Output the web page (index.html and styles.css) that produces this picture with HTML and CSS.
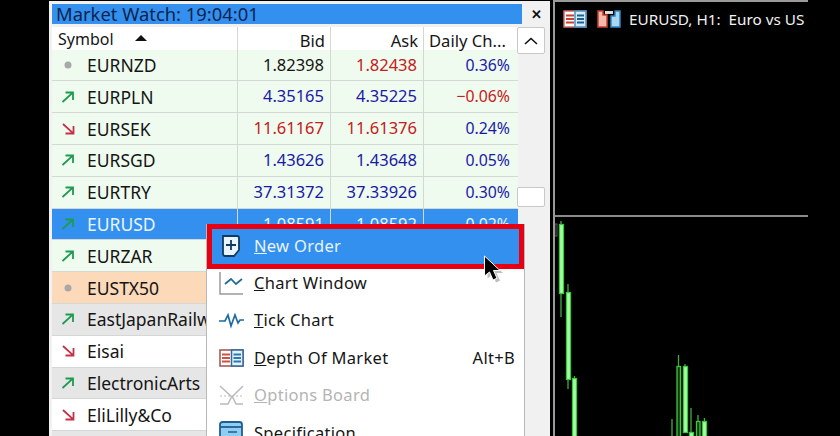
FILE: index.html
```html
<!DOCTYPE html>
<html lang="en">
<head>
<meta charset="utf-8">
<title>Market Watch</title>
<link rel="stylesheet" href="styles.css">
</head>
<body>
<svg class="defs" width="0" height="0">
  <defs>
    <symbol id="up" viewBox="0 0 14 12"><path d="M1.5 11 11.5 1.8M4.5 1.5h7.5v7.5" fill="none" stroke="#1c9c50" stroke-width="1.8"/></symbol>
    <symbol id="down" viewBox="0 0 14 12"><path d="M2 1 12 10.2M12.500 3v7.500H4.500" fill="none" stroke="#c43048" stroke-width="1.800"/></symbol>
    <symbol id="flat" viewBox="0 0 14 12"><circle cx="7" cy="6" r="3.500" fill="#a8a8a8"/></symbol>
  </defs>
</svg>
<div class="app">
  <div class="gutter"></div>
  <section class="panel">
    <div class="titlebar">
      <div class="title">Market Watch: 19:04:01</div>
      <div class="close">✕</div>
    </div>
    <div class="panel-body">
      <div class="table">
        <div class="row head">
          <div class="c sym">Symbol<span class="sort"></span></div>
          <div class="c">Bid</div>
          <div class="c ask">Ask</div>
          <div class="c daily">Daily Ch...</div>
        </div>
        <div class="row green"><div class="c sym"><svg class="ic"><use href="#flat"/></svg>EURNZD</div><div class="c">1.82398</div><div class="c ask neg">1.82438</div><div class="c daily pos">0.36%</div></div>
        <div class="row green"><div class="c sym"><svg class="ic"><use href="#up"/></svg>EURPLN</div><div class="c pos">4.35165</div><div class="c ask pos">4.35225</div><div class="c daily neg">−0.06%</div></div>
        <div class="row green"><div class="c sym"><svg class="ic"><use href="#down"/></svg>EURSEK</div><div class="c neg">11.61167</div><div class="c ask neg">11.61376</div><div class="c daily pos">0.24%</div></div>
        <div class="row green"><div class="c sym"><svg class="ic"><use href="#up"/></svg>EURSGD</div><div class="c pos">1.43626</div><div class="c ask pos">1.43648</div><div class="c daily pos">0.05%</div></div>
        <div class="row green"><div class="c sym"><svg class="ic"><use href="#up"/></svg>EURTRY</div><div class="c pos">37.31372</div><div class="c ask pos">37.33926</div><div class="c daily pos">0.30%</div></div>
        <div class="row sel"><div class="c sym"><svg class="ic"><use href="#up"/></svg>EURUSD</div><div class="c">1.08591</div><div class="c ask">1.08592</div><div class="c daily">0.02%</div></div>
        <div class="row green"><div class="c sym"><svg class="ic"><use href="#up"/></svg>EURZAR</div><div class="c"></div><div class="c ask"></div><div class="c daily"></div></div>
        <div class="row orange"><div class="c sym"><svg class="ic"><use href="#flat"/></svg>EUSTX50</div><div class="c"></div><div class="c ask"></div><div class="c daily"></div></div>
        <div class="row gray"><div class="c sym"><svg class="ic"><use href="#up"/></svg>EastJapanRailway</div><div class="c"></div><div class="c ask"></div><div class="c daily"></div></div>
        <div class="row white"><div class="c sym"><svg class="ic"><use href="#down"/></svg>Eisai</div><div class="c"></div><div class="c ask"></div><div class="c daily"></div></div>
        <div class="row gray"><div class="c sym"><svg class="ic"><use href="#up"/></svg>ElectronicArts</div><div class="c"></div><div class="c ask"></div><div class="c daily"></div></div>
        <div class="row white"><div class="c sym"><svg class="ic"><use href="#down"/></svg>EliLilly&amp;Co</div><div class="c"></div><div class="c ask"></div><div class="c daily"></div></div>
        <div class="row gray"><div class="c sym"></div><div class="c"></div><div class="c ask"></div><div class="c daily"></div></div>
      </div>
      <div class="scroll">
        <div class="scroll-btn">
          <svg width="14" height="8" viewBox="0 0 14 8"><path d="M1 7 7 1.500 13 7" fill="none" stroke="#111" stroke-width="1.600"/></svg>
        </div>
        <div class="scroll-thumb"></div>
      </div>
    </div>
  </section>
  <section class="chart">
    <div class="chart-head">
      <svg class="tool" width="24" height="18" viewBox="0 0 24 18">
        <rect x="1" y="1" width="22" height="16" fill="#fff" stroke="#d06a6a" stroke-width="1.500"/>
        <path d="M12 1h11v16H12z" fill="#d7ecfa" stroke="#4a90c0" stroke-width="1.500"/>
        <path d="M3 5.500h8M3 9h8M3 12.500h8" stroke="#c8402f" stroke-width="2"/>
        <path d="M14 5.500h7M14 9h7M14 12.500h7" stroke="#1f5f90" stroke-width="2"/>
      </svg>
      <svg class="tool" width="24" height="18" viewBox="0 0 24 18">
        <path d="M1 1h5v4h4v12H1z" fill="#f4b9ab" stroke="#c8402f" stroke-width="1.500"/>
        <path d="M18 1h5v16h-9V6h4z" fill="#a9d6f2" stroke="#2c86c4" stroke-width="1.500"/>
        <rect x="8" y="1" width="8" height="3" fill="#ddd"/>
      </svg>
      <span class="chart-title">EURUSD, H1:&nbsp; Euro vs US</span>
    </div>
    <div class="chart-sep"></div>
    <svg class="candles" width="285" height="220" viewBox="555 216 285 220">
      <g class="wick">
        <path d="M561 220V316M568 283V388M574.500 375V436M672 418V436M678.500 354V436M685 363V431M691 407V436M698 414V436M704.500 417V436"/>
      </g>
      <rect class="ghost" x="555" y="223" width="2" height="12"/>
      <g class="body">
        <rect x="559.500" y="223.500" width="4" height="69"/>
        <rect x="566.500" y="291.500" width="4" height="87"/>
        <rect x="572.500" y="377.500" width="4" height="60"/>
        <rect x="683.500" y="365.500" width="4" height="66"/>
        <rect x="689.500" y="431.500" width="4" height="6"/>
        <rect x="702.500" y="420.500" width="4" height="17"/>
      </g>
      <g class="hollow">
        <rect x="677" y="365.500" width="3.500" height="72"/>
        <rect x="696.500" y="420.500" width="3.500" height="17"/>
      </g>
    </svg>
  </section>
  <nav class="menu">
    <div class="item active">
      <svg class="mi" width="24" height="24" viewBox="0 0 24 24">
        <path d="M4 2h14a2 2 0 0 1 2 2v12l-5 6H6a2 2 0 0 1-2-2z" fill="#eaf4ff" stroke="#123a5e" stroke-width="1.800"/>
        <path d="M12 6v10M7 11h10" stroke="#123a5e" stroke-width="1.800"/>
      </svg>
      <span class="label"><u>N</u>ew Order</span>
    </div>
    <div class="item">
      <svg class="mi" width="24" height="24" viewBox="0 0 24 24">
        <path d="M1 1v22h24" fill="none" stroke="#9a9a9a" stroke-width="1.500"/>
        <path d="M6 13 12 8l5 5 6-5" fill="none" stroke="#1d6a9c" stroke-width="1.700"/>
      </svg>
      <span class="label"><u>C</u>hart Window</span>
    </div>
    <div class="item">
      <svg class="mi" width="26" height="24" viewBox="0 0 26 24">
        <path d="M0 12h6l3-6 3 11 4-11 3 8 2-3h4" fill="none" stroke="#1d6a9c" stroke-width="1.700"/>
      </svg>
      <span class="label"><u>T</u>ick Chart</span>
    </div>
    <div class="item">
      <svg class="mi" width="25" height="18" viewBox="0 0 25 18">
        <rect x="1" y="1" width="23" height="16" fill="#fff" stroke="#a05050" stroke-width="1.500"/>
        <path d="M12.500 1H24v16H12.500z" fill="#e4f1fa" stroke="#2c6c9c" stroke-width="1.500"/>
        <path d="M3 5.500h8M3 9h8M3 12.500h8" stroke="#d0503f" stroke-width="2"/>
        <path d="M14.500 5.500h7.500M14.500 9h7.500M14.500 12.500h7.500" stroke="#2c78b0" stroke-width="2"/>
      </svg>
      <span class="label"><u>D</u>epth Of Market</span>
      <span class="keys">Alt+B</span>
    </div>
    <div class="item off">
      <svg class="mi" width="25" height="22" viewBox="0 0 25 22">
        <path d="M1 1 14 13l3 6h7M24 1 12 13l-3 6H1" fill="none" stroke="#bbb" stroke-width="1.500"/>
        <path d="M1 11h23" stroke="#bbb" stroke-dasharray="2 2"/>
      </svg>
      <span class="label"><u>O</u>ptions Board</span>
    </div>
    <div class="item">
      <svg class="mi" width="24" height="24" viewBox="0 0 24 24">
        <rect x="1" y="1" width="22" height="22" rx="2.500" fill="#8fcdf3" stroke="#1f5f90" stroke-width="1.800"/>
        <path d="M1 6h22" stroke="#1f5f90" stroke-width="1.800"/>
        <path d="M9 11h9M9 16h9" stroke="#1f5f90" stroke-width="1.500"/>
      </svg>
      <span class="label">Specification</span>
    </div>
  </nav>
  <svg class="cursor" width="22" height="30" viewBox="0 0 22 30">
    <path d="M4 2v20l5-4 3.500 8 4-1.800-3.500-7.700h6.500z" fill="#000" opacity=".25" transform="translate(1.500 1.500)"/>
    <path d="M2.500 1v20l5-4 3.500 8 4-1.800-3.500-7.700H18z" fill="#000" stroke="#fff" stroke-width="1"/>
  </svg>
</div>
</body>
</html>
```

FILE: styles.css
```css
* { box-sizing: border-box; }
html, body { margin: 0; padding: 0; background: #000; }
body {
  width: 840px;
  height: 436px;
  overflow: hidden;
  font-family: "Noto Sans", "Noto Sans CJK JP", sans-serif;
  font-size: 16.5px;
  color: #151515;
}
.defs { position: absolute; }
.app { position: relative; display: flex; width: 840px; height: 436px; overflow: hidden; background: #000; }
.gutter { width: 49px; flex: none; }

.panel {
  width: 501px;
  height: 436px;
  flex: none;
  margin-top: 1px;
  padding: 3px 0 0 3px;
  background: #f1f1f1;
  overflow: hidden;
}
.titlebar { display: flex; height: 20px; margin-bottom: 3px; }
.title {
  width: 470px;
  height: 20px;
  padding-left: 4px;
  background: #3390ee;
  color: #0b2450;
  font-size: 18.4px;
  line-height: 20px;
  white-space: nowrap;
}
.close { flex: 1; text-align: center; font-size: 13px; font-weight: 700; line-height: 20px; color: #111; }

.panel-body { display: flex; }
.table { width: 466px; flex: none; }
.row {
  display: grid;
  grid-template-columns: 186px 93px 93px 94px;
  height: 31.8px;
  border-bottom: 1.5px solid #d4d8d4;
}
.row.head { height: 22.6px; background: #fff; border-bottom: 0; }
.c {
  padding: 1px 6px 0 0;
  line-height: 28px;
  text-align: right;
  white-space: nowrap;
  overflow: hidden;
  border-right: 1.5px solid #d4d8d4;
}
.c.daily { border-right: 0; padding-right: 8px; font-size: 15.8px; }
.head .c { padding-top: 3.5px; line-height: 19px; padding-right: 5px; overflow: visible; }
.head .c.daily { text-align: left; padding-left: 5px; padding-right: 0; font-size: 16.6px; }
.c.sym { display: flex; align-items: center; padding: 0 0 0 9px; text-align: left; font-size: 17.5px; }
.head .c.sym { padding: 2px 0 0 6px; font-size: 16px; }
.sort { width: 0; height: 0; margin-left: 21px; border: 6px solid transparent; border-top: 0; border-bottom: 6px solid #111; margin-top: -3px; }
.ic { width: 14px; height: 12px; margin-right: 12px; flex: none; }
.pos { color: #1a1aa6; }
.neg { color: #c42020; }
.green { background: #effbef; }
.sel { background: #3390ee; color: #eaf4ff; }
.orange { background: #fcd9b8; }
.gray { background: #e6e6e6; }
.white { background: #fff; }

.scroll { width: 28px; margin-left: -1px; display: flex; flex-direction: column; }
.scroll-btn, .scroll-thumb { background: #fff; border: 1px solid #c8c8c8; border-radius: 2px; }
.scroll-btn { height: 27px; display: flex; align-items: center; justify-content: center; }
.scroll-thumb { height: 20px; margin-top: 133px; }

.chart { position: relative; flex: 1; margin-left: 3px; border-left: 2px solid #9a9a9a; }
.chart::before { content: ""; position: absolute; left: 0; top: 0; width: 253px; height: 2px; background: #9a9a9a; }
.chart-head { display: flex; align-items: flex-start; height: 215px; padding: 10px 0 0 8px; }
.tool { margin-right: 10px; flex: none; }
.tool + .tool { margin-right: 8px; }
.chart-title { color: #f2f2f2; font-size: 15.3px; line-height: 18px; white-space: nowrap; }
.chart-sep { width: 253px; height: 1.5px; background: #8a8a8a; }
.candles { display: block; }
.wick path { stroke: #3fae3f; stroke-width: 1.3; fill: none; }
.ghost { fill: none; stroke: #5a5a5a; stroke-width: 1; }
.body rect { fill: #a6ffa6; stroke: #3cc83c; stroke-width: 1.3; }
.hollow rect { fill: #123a12; stroke: #3cc83c; stroke-width: 1.3; }

.menu {
  position: absolute;
  left: 206px;
  top: 224px;
  width: 319px;
  height: 240px;
  padding: 5px 0 0;
  background: #fff;
  border-left: 1px solid #b8b8b8;
  border-right: 1px solid #b8b8b8;
}
.item {
  display: flex;
  align-items: center;
  height: 37.5px;
  padding-left: 12px;
  font-size: 16.5px;
  letter-spacing: .3px;
  white-space: nowrap;
  position: relative;
}
.item .label { position: absolute; left: 47px; margin-top: -2px; }
.item .keys { position: absolute; right: 9px; margin-top: -2px; }
.item.active {
  height: 34.5px;
  margin: 0 5px;
  padding-left: 7px;
  background: #3390ee;
  color: #eaf4ff;
  outline: 5px solid #e60012;
}
.item.active .label { left: 42px; }
.item.active + .item { margin-top: 1px; }
.item.off { color: #b4b4b4; }
.mi { flex: none; }
.cursor { position: absolute; left: 482px; top: 255px; }
```
